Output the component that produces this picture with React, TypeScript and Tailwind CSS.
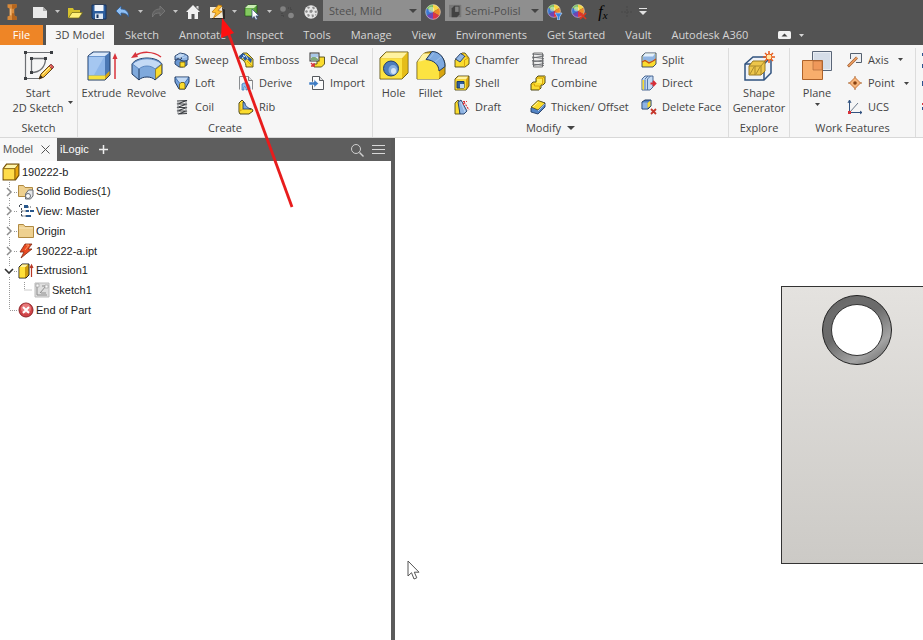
import React from "react";

type IconProps = { size?: number; className?: string; children?: React.ReactNode; box?: number };

function Svg({ size = 16, box, className = "", children }: IconProps) {
  const b = box ?? size;
  return (
    <svg width={size} height={size} viewBox={`0 0 ${b} ${b}`} fill="none" className={`shrink-0 ${className}`} aria-hidden="true">
      {children}
    </svg>
  );
}

const NAVY = "#1f3a63";
const BLUE = "#8fb4e3";
const LBLUE = "#c3d9f3";
const DBLUE = "#4a78b5";
const YEL = "#fbdc2e";
const LYEL = "#fff3a0";
const DYEL = "#d9a50f";

/* ---------- quick access icons ---------- */
const LogoIcon = () => (
  <Svg size={18} box={16}>
    <path d="M4 1h8v3l-2 1v6l2 1v3H4v-3l2-1V5L4 4z" fill="#d98a3a" />
    <path d="M4 1h8v3l-2 1H8V1zM8 9h2v2l2 1v3H8z" fill="#b5651d" />
    <path d="M6 5h1.500v6H6z" fill="#f2b878" />
  </Svg>
);
const NewIcon = () => (
  <Svg size={16}>
    <path d="M1 3h10l4 4v7H1z" fill="#e9e9e9" />
    <path d="M11 3l4 4h-4z" fill="#a9a9a9" />
  </Svg>
);
const OpenIcon = () => (
  <Svg size={16}>
    <path d="M1 4h5l1 2h6v3H5l-3 5H1z" fill="#d6c22c" />
    <path d="M5 8.500h10.500L12 14H1.500z" fill="#fff17a" stroke="#6e6510" strokeWidth=".7" />
  </Svg>
);
const SaveIcon = () => (
  <Svg size={16}>
    <path d="M1 1h14v14H2l-1-1z" fill="#2d5e9e" stroke="#17335e" />
    <rect x="3.500" y="1" width="9" height="6" fill="#f2f5fa" />
    <rect x="4" y="9.500" width="8" height="5.500" fill="#dfe8f3" />
    <rect x="5.500" y="10.500" width="2" height="3.500" fill="#17335e" />
  </Svg>
);
const UndoIcon = () => (
  <Svg size={16}>
    <path d="M1 7l5-5v3c5 0 8 3 7.500 8-1-3-3.500-4-7.500-4v3z" fill="#8fc0f5" stroke="#315f9b" strokeWidth=".8" />
  </Svg>
);
const RedoIcon = () => (
  <Svg size={16}>
    <path d="M15 7l-5-5v3C5 5 2 8 2.500 13c1-3 3.500-4 7.500-4v3z" fill="#606060" stroke="#7c7c7c" strokeWidth=".8" />
  </Svg>
);
const HomeIcon = () => (
  <Svg size={16}>
    <path d="M8 1l7 7h-2v7H9.500v-5h-3v5H3V8H1z" fill="#f0f0f0" />
    <path d="M11.500 2h2v3.500l-2-2z" fill="#d8d8d8" />
  </Svg>
);
const UpdateIcon = () => (
  <Svg size={16}>
    <path d="M1 3h12l2 2v9H1z" fill="#f2ead6" />
    <path d="M13 3l3 3v9H3v-1h11z" fill="#2d2926" />
    <path d="M9.500 1L3 8l4 1-2.500 5L13 7.500 9 6.500 13 2z" fill="#ffbe2e" stroke="#c47a0c" strokeWidth=".8" />
  </Svg>
);
const PickIcon = () => (
  <Svg size={16}>
    <path d="M1 4l3-3h9v8l-3 3H1z" fill="#57a33a" stroke="#245a17" strokeWidth=".8" />
    <path d="M1 4l3-3h9l-3 3z" fill="#c9ecb3" />
    <path d="M1.500 4.500h8v7h-8z" fill="#83c95f" />
    <path d="M8 5v9.500l2.200-2 1.500 3.200 1.700-.8-1.500-3h3z" fill="#fff" stroke="#2b4b7c" strokeWidth=".7" />
  </Svg>
);
const LinkedIcon = () => (
  <Svg size={16}>
    <circle cx="4" cy="5" r="2.800" fill="#808080" />
    <circle cx="12" cy="11.500" r="2.800" fill="#858585" />
    <path d="M3 9v3h3M9 4h3v3" stroke="#3f3f3f" strokeDasharray="1 1" />
  </Svg>
);
const SphereIcon = () => (
  <Svg size={16}>
    <circle cx="8" cy="8" r="6.700" fill="#e6e6e6" />
    <g fill="#8d8d8d">
      <path d="M5 2.500l2 .5-1 2-2-1zM9 3l2-.5 1 2-2 1zM2 7l2-1 1 2-2 1zM6.500 6.500l2-1 1.500 1.500-1.500 2-2-.5zM11.500 7l2-.5.500 2-2 .5zM4 10.500l2-.5 1 2-2 1zM8.500 10.500h2l.5 2-2 1zM12 10.500l1.500-.5-.8 2z" />
    </g>
  </Svg>
);
const Wheel = () => (
  <g>
    <path d="M7 7V.5A6.500 6.500 0 0 1 12.600 3.800z" fill="#f7d642" />
    <path d="M7 7l5.600-3.200a6.500 6.500 0 0 1 0 6.400z" fill="#ee8a2b" />
    <path d="M7 7l5.600 3.200A6.500 6.500 0 0 1 7 13.500z" fill="#dc3545" />
    <path d="M7 7v6.500a6.500 6.500 0 0 1-5.600-3.300z" fill="#7045b5" />
    <path d="M7 7l-5.600 3.200a6.500 6.500 0 0 1 0-6.400z" fill="#3c77d2" />
    <path d="M7 7L1.400 3.800A6.500 6.500 0 0 1 7 .5z" fill="#76bd57" />
    <circle cx="5.500" cy="5" r="2.500" fill="#fff" opacity=".45" />
    <circle cx="7" cy="7" r="6.400" stroke="#ddd" strokeWidth=".5" />
  </g>
);
const WheelIcon = () => (
  <Svg size={16} box={14}>
    <Wheel />
  </Svg>
);
const WheelDownIcon = () => (
  <Svg size={16}>
    <Wheel />
    <path d="M8 9h7l-2.500 4v3h-2v-3z" fill="#3385e8" stroke="#cfe3ff" strokeWidth=".6" />
  </Svg>
);
const WheelOffIcon = () => (
  <Svg size={16}>
    <Wheel />
    <path d="M9 9l6 6M15 9l-6 6" stroke="#e0361d" strokeWidth="1.700" />
  </Svg>
);

/* ---------- ribbon large icons ---------- */
const StartSketchIcon = () => (
  <Svg size={32}>
    <path d="M4 2.500h25M3.500 3v26M4 28.500h14" stroke="#6d7074" strokeWidth="1.200" />
    <path d="M9.500 8.500h14c0 8-5 14-14 14z" stroke="#6d7074" strokeWidth="1.300" />
    <g fill="#3b3e42">
      <path d="M2 1h3v3H2zM28 1h3v3h-3zM2 27h3v3H2zM8 7h3v3H8zM22 7h3v3h-3zM8 21h3v3H8z" />
    </g>
    <path d="M17 29l2-5L28 15l3 3-9 9z" fill="#f8c33a" stroke="#684515" />
    <path d="M27 16l2-2 3 3-2 2z" fill="#d95454" stroke="#6b3434" strokeWidth=".7" />
    <path d="M17 29l1.500-4 2.500 2.500z" fill="#3a2a1a" />
    <path d="M20.500 24.500l8-8" stroke="#fff0a5" />
  </Svg>
);
const ExtrudeIcon = () => (
  <Svg size={32}>
    <path d="M2 6l5-4h17v23l-5 5H2z" fill={DBLUE} stroke={NAVY} />
    <path d="M2.500 6.500H19v19H2.500z" fill="#8db6ea" />
    <path d="M3 7h15L8 25H3z" fill="#a5c7f1" />
    <path d="M2.500 6l5-3.500h16L19 6z" fill="#dbe9fa" />
    <path d="M2.500 25.500H19V29.500H2.500z" fill="#f8e13e" />
    <path d="M19 25.500l4.500-4.500v4L19 29.500z" fill={DYEL} />
    <path d="M29 29V7" stroke="#d8333b" strokeWidth="1.500" />
    <path d="M29 3l2.500 6h-5z" fill="#d8333b" />
  </Svg>
);
const RevolveIcon = () => (
  <Svg size={32}>
    <path d="M1 14c5-8 25-8 30 0v10l-7 6c-3-4-13-4-16 0l-7-6z" fill="#7fa9dc" stroke={NAVY} />
    <path d="M1.500 14C8 7 24 7 30.500 14L24 19c-4-4-12-4-16 0z" fill="#c4daf5" stroke={DBLUE} strokeWidth=".8" />
    <path d="M24.500 19.500l6-5v9l-6 5.500z" fill={YEL} stroke="#86711d" strokeWidth=".8" />
    <path d="M8 19v10.500" stroke={NAVY} />
    <path d="M4 6c7-5 18-5 26 1" stroke="#d8333b" strokeWidth="1.500" />
    <path d="M0 8l4.500-6 2.500 5z" fill="#d8333b" />
  </Svg>
);
const HoleIcon = () => (
  <Svg size={32}>
    <path d="M2 8l6-6h22v21l-6 6H2z" fill={DYEL} stroke="#6b6020" />
    <path d="M2.500 8.500L8 2.500h21.500L24 8.500z" fill={LYEL} />
    <path d="M2.500 8.500H24v20H2.500z" fill="#fce341" />
    <path d="M24 8.500l5.500-6v20L24 28.500z" fill="#e5bd19" />
    <circle cx="13" cy="18.500" r="7.500" fill="#4d7dbd" stroke="#223d68" />
    <ellipse cx="15" cy="20" rx="4.500" ry="5" fill="#86aede" />
    <ellipse cx="15.500" cy="21" rx="2.500" ry="3" fill="#d5e5f7" />
  </Svg>
);
const FilletIcon = () => (
  <Svg size={32}>
    <path d="M2 12l6-8c4-3 12-3 16 0 5 4 6 8 6 12v8l-6 5H2z" fill={DYEL} stroke="#6b6020" />
    <path d="M2.500 12C10 8 22 9 24 21v8H2.500z" fill="#fce341" />
    <path d="M2.500 12L8 3.500h7L11 10z" fill={LYEL} />
    <path d="M11 9.500l6-8c8 0 13 7 13 15L24 21c0-6-5-11-13-11.500z" fill="#7ea9df" stroke={NAVY} />
    <path d="M14 9l5-6M20 12l6-5" stroke="#9cc0ea" />
  </Svg>
);
const ShapeGenIcon = () => (
  <Svg size={32}>
    <path d="M2 14L10 7h18v16l-7 7H2z" fill="#f0f3f8" stroke="#31537f" strokeWidth="1.500" />
    <path d="M2 14h19v16M21 14l7-7" stroke="#31537f" strokeWidth="1.500" />
    <path d="M6 16l4-5h12v10l-4 4H6z" fill="#edc64b" stroke="#9a7a22" />
    <path d="M6 16h12v9M18 16l4-5M12 16v9M7 24l4-7M13 24l4-7" stroke="#9a7a22" strokeWidth=".8" />
    <g stroke="#e65b1d" strokeWidth="1.500">
      <path d="M26 1v12M20 7h12M22 3l8 8M30 3l-8 8" />
    </g>
    <circle cx="26" cy="7" r="3" fill="#ffe9a8" stroke="#e65b1d" />
  </Svg>
);
const PlaneIcon = () => (
  <Svg size={32}>
    <path d="M11.500 1.500h19v19h-19z" fill="#e9edf3" stroke="#5a6678" />
    <path d="M13 3h16v16H13z" fill="#d5dde8" />
    <path d="M1.500 10.500h20v19h-20z" fill="#f8ae6c" stroke="#ad622a" />
    <path d="M12 11h9v9h-9z" fill="#ef985a" stroke="#b16c3b" strokeWidth=".7" />
  </Svg>
);

/* ---------- ribbon small icons ---------- */
const SweepIcon = () => (
  <Svg>
    <path d="M1 4l5-3 5 1 3 2v4l-4 2-4-2 2-2H5L1 8z" fill={BLUE} stroke={NAVY} strokeWidth=".9" />
    <path d="M2 4.500L6 2l4 1-4 2.500zM8 6l5-1.500" fill={LBLUE} stroke={LBLUE} strokeWidth=".8" />
    <path d="M1 9l3-2 5 2 4 0v4l-4 2H5l-4-3z" fill="#6a97d2" stroke={NAVY} strokeWidth=".9" />
    <path d="M6 10h5v5H6z" fill={YEL} stroke="#68560e" strokeWidth=".8" />
  </Svg>
);
const LoftIcon = () => (
  <Svg>
    <path d="M1 2h14v5l-4 7H5L1 7z" fill="#76a2dc" stroke={NAVY} />
    <path d="M2 2.500h12l-3 5H5z" fill={LBLUE} />
    <path d="M5.500 9L7 7.500h3l1 1.500v5H5.500z" fill={YEL} stroke="#68560e" strokeWidth=".8" />
    <path d="M1.500 3l4 5M14.500 3l-4 5" stroke={DBLUE} />
  </Svg>
);
const CoilIcon = () => (
  <Svg>
    <path d="M3 2l10-.5L3 5h10L3 8.500h10L3 12h10L4 15l9-.5" stroke="#3c3f43" strokeWidth="1.200" />
    <path d="M4 2v13M12 2v12" stroke="#8b8e92" />
  </Svg>
);
const EmbossIcon = () => (
  <Svg>
    <path d="M1 5l4-4h4l6 6v8H8C8 10 5 7 1 6z" fill={YEL} stroke="#514a19" strokeWidth=".9" />
    <path d="M1 4l4-3 9 6-1 4-4-4-2 2-2-3-2 1z" fill="#29599b" />
    <path d="M5 3l2 2M8 4l2 3M4 6l4-3" stroke="#c8e0ff" />
    <path d="M9 9l5 5" stroke={DYEL} />
  </Svg>
);
const DeriveIcon = () => (
  <Svg>
    <path d="M1.500 14.500v-13h9l4 4v9" fill="#f8f8f8" stroke="#8a8d91" />
    <path d="M10.500 1.500v4h4" fill="#ddd" stroke="#777" />
    <path d="M4 15V9c5-3 8 0 8 5l-4 1c0-3-1-4-2-3v3z" fill="#8dc0ef" stroke="#3c79b9" strokeWidth=".8" />
  </Svg>
);
const RibIcon = () => (
  <Svg>
    <path d="M1 4l3-3 2 2v6l8 1 1 2-4 3H2l-1-2z" fill={YEL} stroke="#514a19" />
    <path d="M5 3v7h8c-3-1-6-3-6-6z" fill="#7aa7e0" stroke={NAVY} strokeWidth=".8" />
    <path d="M2 5v7l3-2" stroke={DYEL} />
  </Svg>
);
const DecalIcon = () => (
  <Svg>
    <path d="M8 7l2-2h5.500v7l-3 3H5v-3h3z" fill={YEL} stroke="#514a19" strokeWidth=".9" />
    <rect x="1" y="1" width="9" height="8" fill="#e8eef5" stroke="#333" />
    <path d="M2 6l3-2 4 3v1.500H2z" fill="#7fa878" />
    <path d="M2 2h7v3H2z" fill="#a9c8e8" />
    <path d="M2 11l3 3M5 11v3H2" stroke="#d8333b" strokeWidth="1.400" />
  </Svg>
);
const ImportIcon = () => (
  <Svg>
    <path d="M3.500 1.500h7l4 4v9h-11z" fill="#fcfcfc" stroke="#55595e" />
    <path d="M10.500 1.500v4h4" fill="#ddd" stroke="#55595e" />
    <path d="M0 7h5V4.500L9.500 8.500 5 12.500V10H0z" fill="#3e7cc4" stroke="#fff" strokeWidth=".5" />
  </Svg>
);
const ChamferIcon = () => (
  <Svg>
    <path d="M1 8l7-7h3l4 5v6l-4 3H1z" fill={YEL} stroke="#514a19" strokeWidth=".9" />
    <path d="M1.500 7l5-5.500L11 4l-5 6z" fill={BLUE} stroke={NAVY} strokeWidth=".9" />
    <path d="M8 1l3 3 3.500 2-4 2V15" stroke={DYEL} />
  </Svg>
);
const ShellIcon = () => (
  <Svg>
    <path d="M1 4l3-3h11v10l-3 4H1z" fill={DYEL} stroke="#514a19" strokeWidth=".9" />
    <path d="M1.500 4.500l3-3H14L12 4.500z" fill={LYEL} />
    <path d="M1.500 4.500H12v10H1.500z" fill={YEL} />
    <path d="M3 6.500h7v6.500H3z" fill="#305f9d" stroke={NAVY} />
    <path d="M6 9h4v4H6z" fill={LBLUE} />
  </Svg>
);
const DraftIcon = () => (
  <Svg>
    <path d="M1 4l3-3 2 2v12H1z" fill={YEL} stroke="#514a19" strokeWidth=".9" />
    <path d="M4 3l3-2 6 11-3 3H6z" fill={BLUE} stroke={NAVY} strokeWidth=".9" />
    <path d="M7 3l4 10" stroke={LBLUE} />
    <path d="M10 3l5 8M9.500 6V2.500H13" stroke="#d8333b" strokeWidth="1.200" strokeDasharray="2 1" />
  </Svg>
);
const ThreadIcon = () => (
  <Svg>
    <path d="M3.500 1h9v14h-9z" fill="#eee" stroke="#777" />
    <path d="M2 2l12 1M2 5l12 1.500M2 8.500L14 10M2 12l12 1.500M2 6l12-2M2 10l12-2M3 13.500l11-2" stroke="#66696d" strokeWidth=".9" />
  </Svg>
);
const CombineIcon = () => (
  <Svg>
    <path d="M6 3l2-2h7v7l-2 2h-2v3l-2 2H1V9l2-2h3z" fill={YEL} stroke="#514a19" />
    <path d="M6.500 3h6v7M13 3l2-2M1.500 9h3v2h5v4" stroke={DYEL} />
    <path d="M7 4h5v4H7z" fill="#ffee60" />
  </Svg>
);
const ThickenIcon = () => (
  <Svg>
    <path d="M1 9l7-7 7 2v4l-7 7-7-2z" fill="#5283c4" stroke={NAVY} strokeWidth=".9" />
    <path d="M1 8l7-6.500L15 4 8 11z" fill={YEL} stroke="#514a19" strokeWidth=".8" />
    <path d="M3 8l5-5" stroke={LYEL} />
    <path d="M8 12l6.500-7" stroke={LBLUE} />
  </Svg>
);
const SplitIcon = () => (
  <Svg>
    <path d="M1 4l3-3h11v11l-3 3H1z" fill={YEL} stroke="#2f4263" strokeWidth=".9" />
    <path d="M1.500 4.500L4 1.500h10.500V7L12 9 8 10 5 8l-3.500 1z" fill={BLUE} />
    <path d="M2 4.500l2-3h10l-2 3z" fill="#e4effc" />
    <path d="M1 10l3-1.500L8 11l4-2 3-2" stroke="#bf4c1b" strokeWidth="1.200" />
  </Svg>
);
const DirectIcon = () => (
  <Svg>
    <path d="M1 4l3-3h8v11l-3 3H1z" fill={LBLUE} stroke="#3c5c8a" strokeWidth=".9" />
    <path d="M4 4.500v10M6.500 4v11M4 4l3-3M6.500 4l3-3" stroke="#4a6da0" strokeWidth=".9" />
    <path d="M1.500 5H3v9.500H1.500z" fill={YEL} />
    <path d="M9.500 8.500H14M12 6l2.500 2.500L12 11" stroke="#d82d37" strokeWidth="1.800" />
  </Svg>
);
const DeleteFaceIcon = () => (
  <Svg>
    <path d="M1 3l3-2h6v6L7 10H1z" fill="#5283c4" stroke={NAVY} />
    <path d="M1.500 3.500h5v6h-5z" fill={BLUE} />
    <path d="M6.500 4l3-2.500v5.500l-3 2z" fill={YEL} />
    <path d="M10 10l5 5M15 10l-5 5" stroke="#c5362b" strokeWidth="1.800" />
  </Svg>
);
const AxisIcon = () => (
  <Svg>
    <path d="M3.500 7V1.500h11v9H9" fill="#eef0f3" stroke="#55606e" />
    <path d="M1 14.500L10 5.500" stroke="#a25c2c" strokeWidth="2.600" />
    <path d="M1.500 14L10 5.500" stroke="#f3a668" strokeWidth="1.200" />
  </Svg>
);
const PointIcon = () => (
  <Svg>
    <path d="M8 1v14M1 8h14" stroke="#a4622f" />
    <path d="M8 2.500L13.500 8 8 13.500 2.500 8z" fill="#f6b57b" stroke="#c9763a" />
    <circle cx="8" cy="8" r="1.800" fill="#854011" />
  </Svg>
);
const UcsIcon = () => (
  <Svg>
    <path d="M2.500 13V2M1 4l1.500-3L4 4M3 13.500h12M13 12l2 1.500-2 1.500" stroke="#31527f" />
    <path d="M3 13l8-9" stroke="#687789" />
    <rect x="1" y="12" width="3" height="3" fill="#d8333b" />
  </Svg>
);

/* ---------- browser tree icons ---------- */
const PartIcon = () => (
  <Svg size={18} box={16}>
    <path d="M1 5l3-4h11v10l-3 4H1z" fill="#e9a60c" stroke="#6f4d08" />
    <path d="M1.500 5l3-3.500H14L11.500 5z" fill="#fff6ad" />
    <path d="M1.500 5H11v9.500H1.500z" fill="#ffdc4a" />
    <path d="M1.500 5H11.500v9.500M11.500 5l3-3.500" stroke="#7a570b" strokeWidth=".8" />
  </Svg>
);
const FolderIcon = () => (
  <Svg>
    <path d="M.500 14.500v-13h5l1.500 2h8.500v11z" fill="#eed08f" stroke="#b08a42" />
    <path d="M1 5h14" stroke="#f9e5b8" />
  </Svg>
);
const BodiesIcon = () => (
  <Svg>
    <path d="M.500 12.500v-11h5l1.500 2h7.500v9z" fill="#eed08f" stroke="#b08a42" />
    <path d="M7.500 10l3-4h4.500v6l-2.500 3H7.500z" fill="#e6e8eb" stroke="#686d73" />
    <circle cx="10" cy="12" r="2.500" fill="#fafafa" stroke="#686d73" />
  </Svg>
);
const ViewIcon = () => (
  <Svg>
    <path d="M4 1.500H1.500V5M3.500 5v9M3.500 8H8M3.500 13H8M9 4h4" stroke="#464e58" strokeDasharray="2 1" />
    <path d="M6 2h4v3H6zM8 7h3v2H8zM12 7h4v2h-4zM8 12h5v2H8z" fill="#28578c" />
  </Svg>
);
const BoltIcon = () => (
  <Svg>
    <path d="M7 1h7l-4 5h4L3 15l3-6H2z" fill="#e84a22" stroke="#7e2812" strokeWidth=".8" />
    <path d="M8 2h3L7 7" stroke="#ff9a63" />
  </Svg>
);
const ExtrusionIcon = () => (
  <Svg>
    <path d="M1 4l3-3h7v11l-3 3H1z" fill="#cf9c0c" stroke="#292929" />
    <path d="M1.500 4H7v10.500H1.500z" fill="#ffdf38" />
    <path d="M2 4l2-2.500h6L7.500 4z" fill={LYEL} />
    <path d="M13.500 14V3M12 5l1.500-3L15 5" stroke="#b93725" strokeWidth="1.200" />
  </Svg>
);
const SketchIcon = () => (
  <Svg>
    <path d="M1 1h14v14H1z" fill="#dedede" stroke="#bbb" />
    <path d="M3 4v9h10M6 11l6-7M8 4h5M7 11h5" stroke="#8c8c8c" />
    <path d="M2 2h3v3H2zM11 3h3v3h-3z" fill="#f8f8f8" stroke="#999" strokeWidth=".6" />
  </Svg>
);
const EndIcon = () => (
  <Svg>
    <circle cx="8" cy="8" r="7" fill="#cf4347" stroke="#8f2428" />
    <circle cx="8" cy="6.500" r="5" fill="#e7797a" />
    <path d="M5 5l6 6M11 5l-6 6" stroke="#fff" strokeWidth="2" />
  </Svg>
);

/* ---------- shared controls ---------- */
function Caret({ className = "" }: { className?: string }) {
  return (
    <svg width="5" height="3" viewBox="0 0 5 3" className={`shrink-0 fill-current ${className}`} aria-hidden="true">
      <path d="M0 0h5L2.500 3z" />
    </svg>
  );
}

function QuickButton({ label, children, className = "" }: { label: string; children: React.ReactNode; className?: string }) {
  return (
    <button type="button" aria-label={label} className={`flex h-full w-6 shrink-0 items-center justify-center ${className}`}>
      {children}
    </button>
  );
}

function QuickMenu({ label }: { label: string }) {
  return (
    <button type="button" aria-label={label} className="mr-px flex h-full w-2.5 shrink-0 items-center justify-center text-[#c4c4c4]">
      <Caret />
    </button>
  );
}

function Combo({ label, value, icon }: { label: string; value: string; icon?: React.ReactNode }) {
  return (
    <label className="flex h-[21px] w-[98px] shrink-0 items-center gap-0.5 self-start bg-[#8f8f8f] px-1 text-[#505050]">
      <span className="sr-only">{label}</span>
      {icon}
      <select className={`h-[21px] min-w-0 flex-1 appearance-none bg-transparent leading-[21px] outline-none ${icon ? "" : "pl-0.5"}`} defaultValue={value}>
        <option>{value}</option>
      </select>
      <svg width="8" height="4" viewBox="0 0 8 4" className="shrink-0 fill-[#444]" aria-hidden="true">
        <path d="M0 0h8L4 4z" />
      </svg>
    </label>
  );
}

type Cmd = { label: string; icon: React.ReactNode; menu?: boolean };

function Column({ items, className = "" }: { items: Cmd[]; className?: string }) {
  return (
    <div className={`grid shrink-0 grid-rows-3 ${className}`}>
      {items.map((c) => (
        <button key={c.label} type="button" className="flex items-center gap-[5px] whitespace-nowrap text-left">
          {c.icon}
          <span>{c.label}</span>
          {c.menu && <Caret className="ml-1" />}
        </button>
      ))}
    </div>
  );
}

function Big({ lines, icon, className = "", children }: { lines: string[]; icon: React.ReactNode; className?: string; children?: React.ReactNode }) {
  return (
    <button type="button" className={`flex shrink-0 flex-col items-center pt-0.5 whitespace-nowrap ${className}`}>
      {icon}
      <span className="mt-[3px] flex flex-col leading-[15px]">
        {lines.map((l) => (
          <span key={l}>{l}</span>
        ))}
      </span>
      {children}
    </button>
  );
}

function Group({ title, className = "", menu, children }: { title: string; className?: string; menu?: boolean; children: React.ReactNode }) {
  return (
    <section aria-label={title} className={`flex shrink-0 flex-col border-r border-[#dcdcdc] ${className}`}>
      <div className="flex h-[71px] justify-start">{children}</div>
      <h2 className="flex h-[18px] items-center justify-center gap-1.5">
        {title}
        {menu && (
          <svg width="8" height="4" viewBox="0 0 8 4" className="fill-[#444]" aria-hidden="true">
            <path d="M0 0h8L4 4z" />
          </svg>
        )}
      </h2>
    </section>
  );
}

function QuickAccess() {
  return (
    <div className="flex h-[23px] items-center overflow-hidden">
      <QuickButton label="Application menu" className="mr-1"><LogoIcon /></QuickButton>
      <QuickButton label="New"><NewIcon /></QuickButton>
      <QuickMenu label="New options" />
      <QuickButton label="Open"><OpenIcon /></QuickButton>
      <QuickButton label="Save"><SaveIcon /></QuickButton>
      <QuickButton label="Undo"><UndoIcon /></QuickButton>
      <QuickMenu label="Undo history" />
      <QuickButton label="Redo"><RedoIcon /></QuickButton>
      <QuickMenu label="Redo history" />
      <QuickButton label="Home"><HomeIcon /></QuickButton>
      <QuickButton label="Update"><UpdateIcon /></QuickButton>
      <QuickMenu label="Update options" />
      <QuickButton label="Select"><PickIcon /></QuickButton>
      <QuickMenu label="Select options" />
      <QuickButton label="Links"><LinkedIcon /></QuickButton>
      <QuickButton label="Material browser"><SphereIcon /></QuickButton>
      <Combo label="Material" value="Steel, Mild" />
      <QuickButton label="Appearance browser"><WheelIcon /></QuickButton>
      <Combo
        label="Appearance"
        value="Semi-Polisl"
        icon={
          <Svg size={14} box={16}>
            <path d="M0 1h14v14H0z" fill="#777" />
            <path d="M3 5l3-3h6v10l-3 3H3z" fill="#414141" />
            <path d="M7 3h4v6H7z" fill="#808080" />
          </Svg>
        }
      />
      <QuickButton label="Adjust appearance"><WheelDownIcon /></QuickButton>
      <QuickButton label="Clear appearance"><WheelOffIcon /></QuickButton>
      <QuickButton label="Parameters">
        <span className="font-['Liberation_Serif',serif] text-base leading-none text-black italic">
          f<sub className="text-[11px]">x</sub>
        </span>
      </QuickButton>
      <QuickButton label="Add"><Svg><path d="M8 2v12M2 8h12" stroke="#484848" strokeDasharray="2 1" /></Svg></QuickButton>
      <QuickButton label="Customize quick access toolbar" className="-ml-2">
        <svg width="8" height="7" viewBox="0 0 8 7" className="fill-[#e2e2e2]" aria-hidden="true">
          <path d="M0 0h8v1H0zM0 3h8L4 7z" />
        </svg>
      </QuickButton>
    </div>
  );
}

const TABS = ["Sketch", "Annotate", "Inspect", "Tools", "Manage", "View", "Environments", "Get Started", "Vault", "Autodesk A360"];

function TabBar() {
  return (
    <nav aria-label="Ribbon tabs" className="flex h-[22px] items-stretch pt-0.5 whitespace-nowrap text-[#d6d6d6]">
      <button type="button" className="mr-[3px] w-[43px] shrink-0 bg-[#ee8526] text-white">File</button>
      <button type="button" className="mr-px w-[68px] shrink-0 bg-[#f6f6f6] text-[#444]">3D Model</button>
      {TABS.map((t) => (
        <button key={t} type="button" className="shrink-0 px-2.5">{t}</button>
      ))}
      <button type="button" aria-label="Ribbon display" className="ml-5 flex shrink-0 items-center gap-2">
        <svg width="13" height="8" viewBox="0 0 13 8" aria-hidden="true">
          <rect width="13" height="8" rx="1.500" fill="#f2f2f2" />
          <path d="M3.500 5.500h6l-3-3z" fill="#444" />
        </svg>
        <Caret />
      </button>
    </nav>
  );
}

function Ribbon() {
  return (
    <div className="flex h-[92px] items-stretch overflow-hidden bg-[#f6f6f6] pt-[3px] text-[#444]">
      <Group title="Sketch" className="w-[78px]">
        <Big className="w-[76px]" lines={["Start", "2D Sketch"]} icon={<StartSketchIcon />} />
        <Caret className="-ml-2 mt-[53px]" />
      </Group>
      <Group title="Create" className="w-[295px]">
        <Big className="ml-px w-[45px]" lines={["Extrude"]} icon={<ExtrudeIcon />} />
        <Big className="mr-[5px] w-[45px]" lines={["Revolve"]} icon={<RevolveIcon />} />
        <Column className="w-16" items={[{ label: "Sweep", icon: <SweepIcon /> }, { label: "Loft", icon: <LoftIcon /> }, { label: "Coil", icon: <CoilIcon /> }]} />
        <Column className="w-[71px]" items={[{ label: "Emboss", icon: <EmbossIcon /> }, { label: "Derive", icon: <DeriveIcon /> }, { label: "Rib", icon: <RibIcon /> }]} />
        <Column items={[{ label: "Decal", icon: <DecalIcon /> }, { label: "Import", icon: <ImportIcon /> }]} />
      </Group>
      <Group title="Modify" className="w-[356px]" menu>
        <Big className="ml-0.5 w-[37px]" lines={["Hole"]} icon={<HoleIcon />} />
        <Big className="mr-[5px] w-[37px]" lines={["Fillet"]} icon={<FilletIcon />} />
        <Column className="w-[76px]" items={[{ label: "Chamfer", icon: <ChamferIcon /> }, { label: "Shell", icon: <ShellIcon /> }, { label: "Draft", icon: <DraftIcon /> }]} />
        <Column className="w-[111px]" items={[{ label: "Thread", icon: <ThreadIcon /> }, { label: "Combine", icon: <CombineIcon /> }, { label: "Thicken/ Offset", icon: <ThickenIcon /> }]} />
        <Column items={[{ label: "Split", icon: <SplitIcon /> }, { label: "Direct", icon: <DirectIcon /> }, { label: "Delete Face", icon: <DeleteFaceIcon /> }]} />
      </Group>
      <Group title="Explore" className="w-[61px]">
        <Big className="w-[60px]" lines={["Shape", "Generator"]} icon={<ShapeGenIcon />} />
      </Group>
      <Group title="Work Features" className="w-[126px]">
        <Big className="mr-2.5 ml-[7px] w-10" lines={["Plane"]} icon={<PlaneIcon />}>
          <Caret className="mt-[3px]" />
        </Big>
        <Column items={[{ label: "Axis", icon: <AxisIcon />, menu: true }, { label: "Point", icon: <PointIcon />, menu: true }, { label: "UCS", icon: <UcsIcon /> }]} />
      </Group>
      <div className="flex min-w-0 flex-1 flex-col overflow-hidden pl-1.5" aria-hidden="true">
        <svg width="16" height="71" viewBox="0 0 16 71">
          <path d="M0 5h8v3H0zM0 16h8v4H0zM0 33h8v5H0zM0 59h8v3H0z" fill="#2c5490" />
          <path d="M0 55h8v2H0z" fill="#d8333b" />
        </svg>
      </div>
    </div>
  );
}

type Node = { label: string; icon: React.ReactNode; state?: "closed" | "open"; child?: boolean };
const NODES: Node[] = [
  { label: "Solid Bodies(1)", icon: <BodiesIcon />, state: "closed" },
  { label: "View: Master", icon: <ViewIcon />, state: "closed" },
  { label: "Origin", icon: <FolderIcon />, state: "closed" },
  { label: "190222-a.ipt", icon: <BoltIcon />, state: "closed" },
  { label: "Extrusion1", icon: <ExtrusionIcon />, state: "open" },
  { label: "Sketch1", icon: <SketchIcon />, child: true },
  { label: "End of Part", icon: <EndIcon /> },
];

function Gutter({ node }: { node: Node }) {
  const last = !node.state && !node.child;
  return (
    <svg width={node.child ? 34 : 18} height="20" viewBox={`0 0 ${node.child ? 34 : 18} 20`} fill="none" className="shrink-0" aria-hidden="true">
      <path d={last ? "M9.500 0v10" : "M9.500 0v20"} stroke="#999" strokeDasharray="1 1" />
      {node.child ? <path d="M24.500 0v10h8" stroke="#999" strokeDasharray="1 1" /> : <path d="M10 10.500h8" stroke="#999" strokeDasharray="1 1" />}
      {node.state && <rect x="4" y="5" width="10" height="10" fill="#fff" />}
      {node.state === "closed" && <path d="M7 6l4 4-4 4" stroke="#8c8c8c" strokeWidth="1.500" />}
      {node.state === "open" && <path d="M5 8l4 4 4-4" stroke="#333" strokeWidth="1.600" />}
    </svg>
  );
}

function Browser() {
  return (
    <aside className="flex w-[395px] shrink-0 flex-col border-r-4 border-[#5b5b5b] bg-white font-['Liberation_Sans',Arial,sans-serif] text-[11px] text-[#1c1c1c]">
      <div className="flex h-[23px] items-stretch bg-[#5e5e5e] text-white">
        <button type="button" className="flex w-[57px] items-center gap-2 bg-[#f8f8f8] pl-[3px] text-[#555]">
          Model
          <svg width="9" height="9" viewBox="0 0 9 9" stroke="#555" aria-hidden="true"><path d="M.500.500l8 8M8.500.500l-8 8" /></svg>
        </button>
        <button type="button" className="pl-[3px]">iLogic</button>
        <button type="button" aria-label="Add tab" className="px-2.5">
          <svg width="9" height="9" viewBox="0 0 9 9" stroke="#eee" strokeWidth="1.500" aria-hidden="true"><path d="M4.500 0v9M0 4.500h9" /></svg>
        </button>
        <button type="button" aria-label="Search" className="ml-auto px-1">
          <svg width="14" height="14" viewBox="0 0 14 14" fill="none" stroke="#d0d0d0" aria-hidden="true"><circle cx="6" cy="6" r="4.500" /><path d="M9.500 9.500l4 4" strokeWidth="1.400" /></svg>
        </button>
        <button type="button" aria-label="Browser menu" className="mr-0.5 px-1">
          <svg width="13" height="11" viewBox="0 0 13 11" stroke="#d8d8d8" aria-hidden="true"><path d="M0 1.500h13M0 5.500h13M0 9.500h13" /></svg>
        </button>
      </div>
      <ul className="mt-px grid h-[158px] grid-rows-8">
        <li className="flex items-center gap-0.5 pl-0.5"><PartIcon />190222-b</li>
        {NODES.map((n) => (
          <li key={n.label} className="flex items-center overflow-hidden whitespace-nowrap">
            <Gutter node={n} />
            {n.icon}
            <span className="ml-0.5">{n.label}</span>
          </li>
        ))}
      </ul>
    </aside>
  );
}

function Viewport() {
  return (
    <main className="relative min-w-0 flex-1 overflow-hidden bg-white">
      <svg className="absolute top-[148px] left-[386px]" width="560" height="280" viewBox="0 0 560 280" aria-label="Part model">
        <defs>
          <linearGradient id="plate" x1="0" y1="0" x2="0" y2="1">
            <stop offset="0" stopColor="#e4e2df" />
            <stop offset="1" stopColor="#cccac6" />
          </linearGradient>
          <linearGradient id="bore" x1="0" y1="0" x2=".7" y2="1">
            <stop offset="0" stopColor="#606060" />
            <stop offset=".25" stopColor="#6c6c6c" />
            <stop offset=".5" stopColor="#6a6a6a" />
            <stop offset=".85" stopColor="#a4a4a4" />
            <stop offset="1" stopColor="#808080" />
          </linearGradient>
        </defs>
        <rect x=".5" y=".5" width="558" height="277" fill="url(#plate)" stroke="#333" />
        <circle cx="76" cy="44" r="34.500" fill="url(#bore)" stroke="#222" />
        <circle cx="76" cy="44" r="25.500" fill="#fff" stroke="#333" />
      </svg>
      <svg className="absolute top-[422px] left-[12px]" width="14" height="21" viewBox="0 0 14 21" aria-hidden="true">
        <path d="M1 1v15l3.500-3.300L7 19l2.800-1.200-2.500-5.600H12z" fill="#fff" stroke="#555" />
      </svg>
    </main>
  );
}

export default function App() {
  return (
    <div className="relative flex min-h-screen flex-col overflow-hidden bg-white font-['Open_Sans','Noto_Sans',sans-serif] text-[11px]">
      <header className="bg-[#535353] text-[11px]">
        <QuickAccess />
        <TabBar />
        <Ribbon />
      </header>
      <div className="flex flex-1 border-t border-[#d8d8d8]">
        <Browser />
        <Viewport />
      </div>
      <svg className="pointer-events-none absolute top-0 left-0" width="300" height="215" viewBox="0 0 300 215" aria-hidden="true">
        <path d="M292 207L228 32" stroke="#e81c1c" strokeWidth="2.800" />
        <path d="M222 18l12 15-13 5z" fill="#ff1010" />
      </svg>
    </div>
  );
}
